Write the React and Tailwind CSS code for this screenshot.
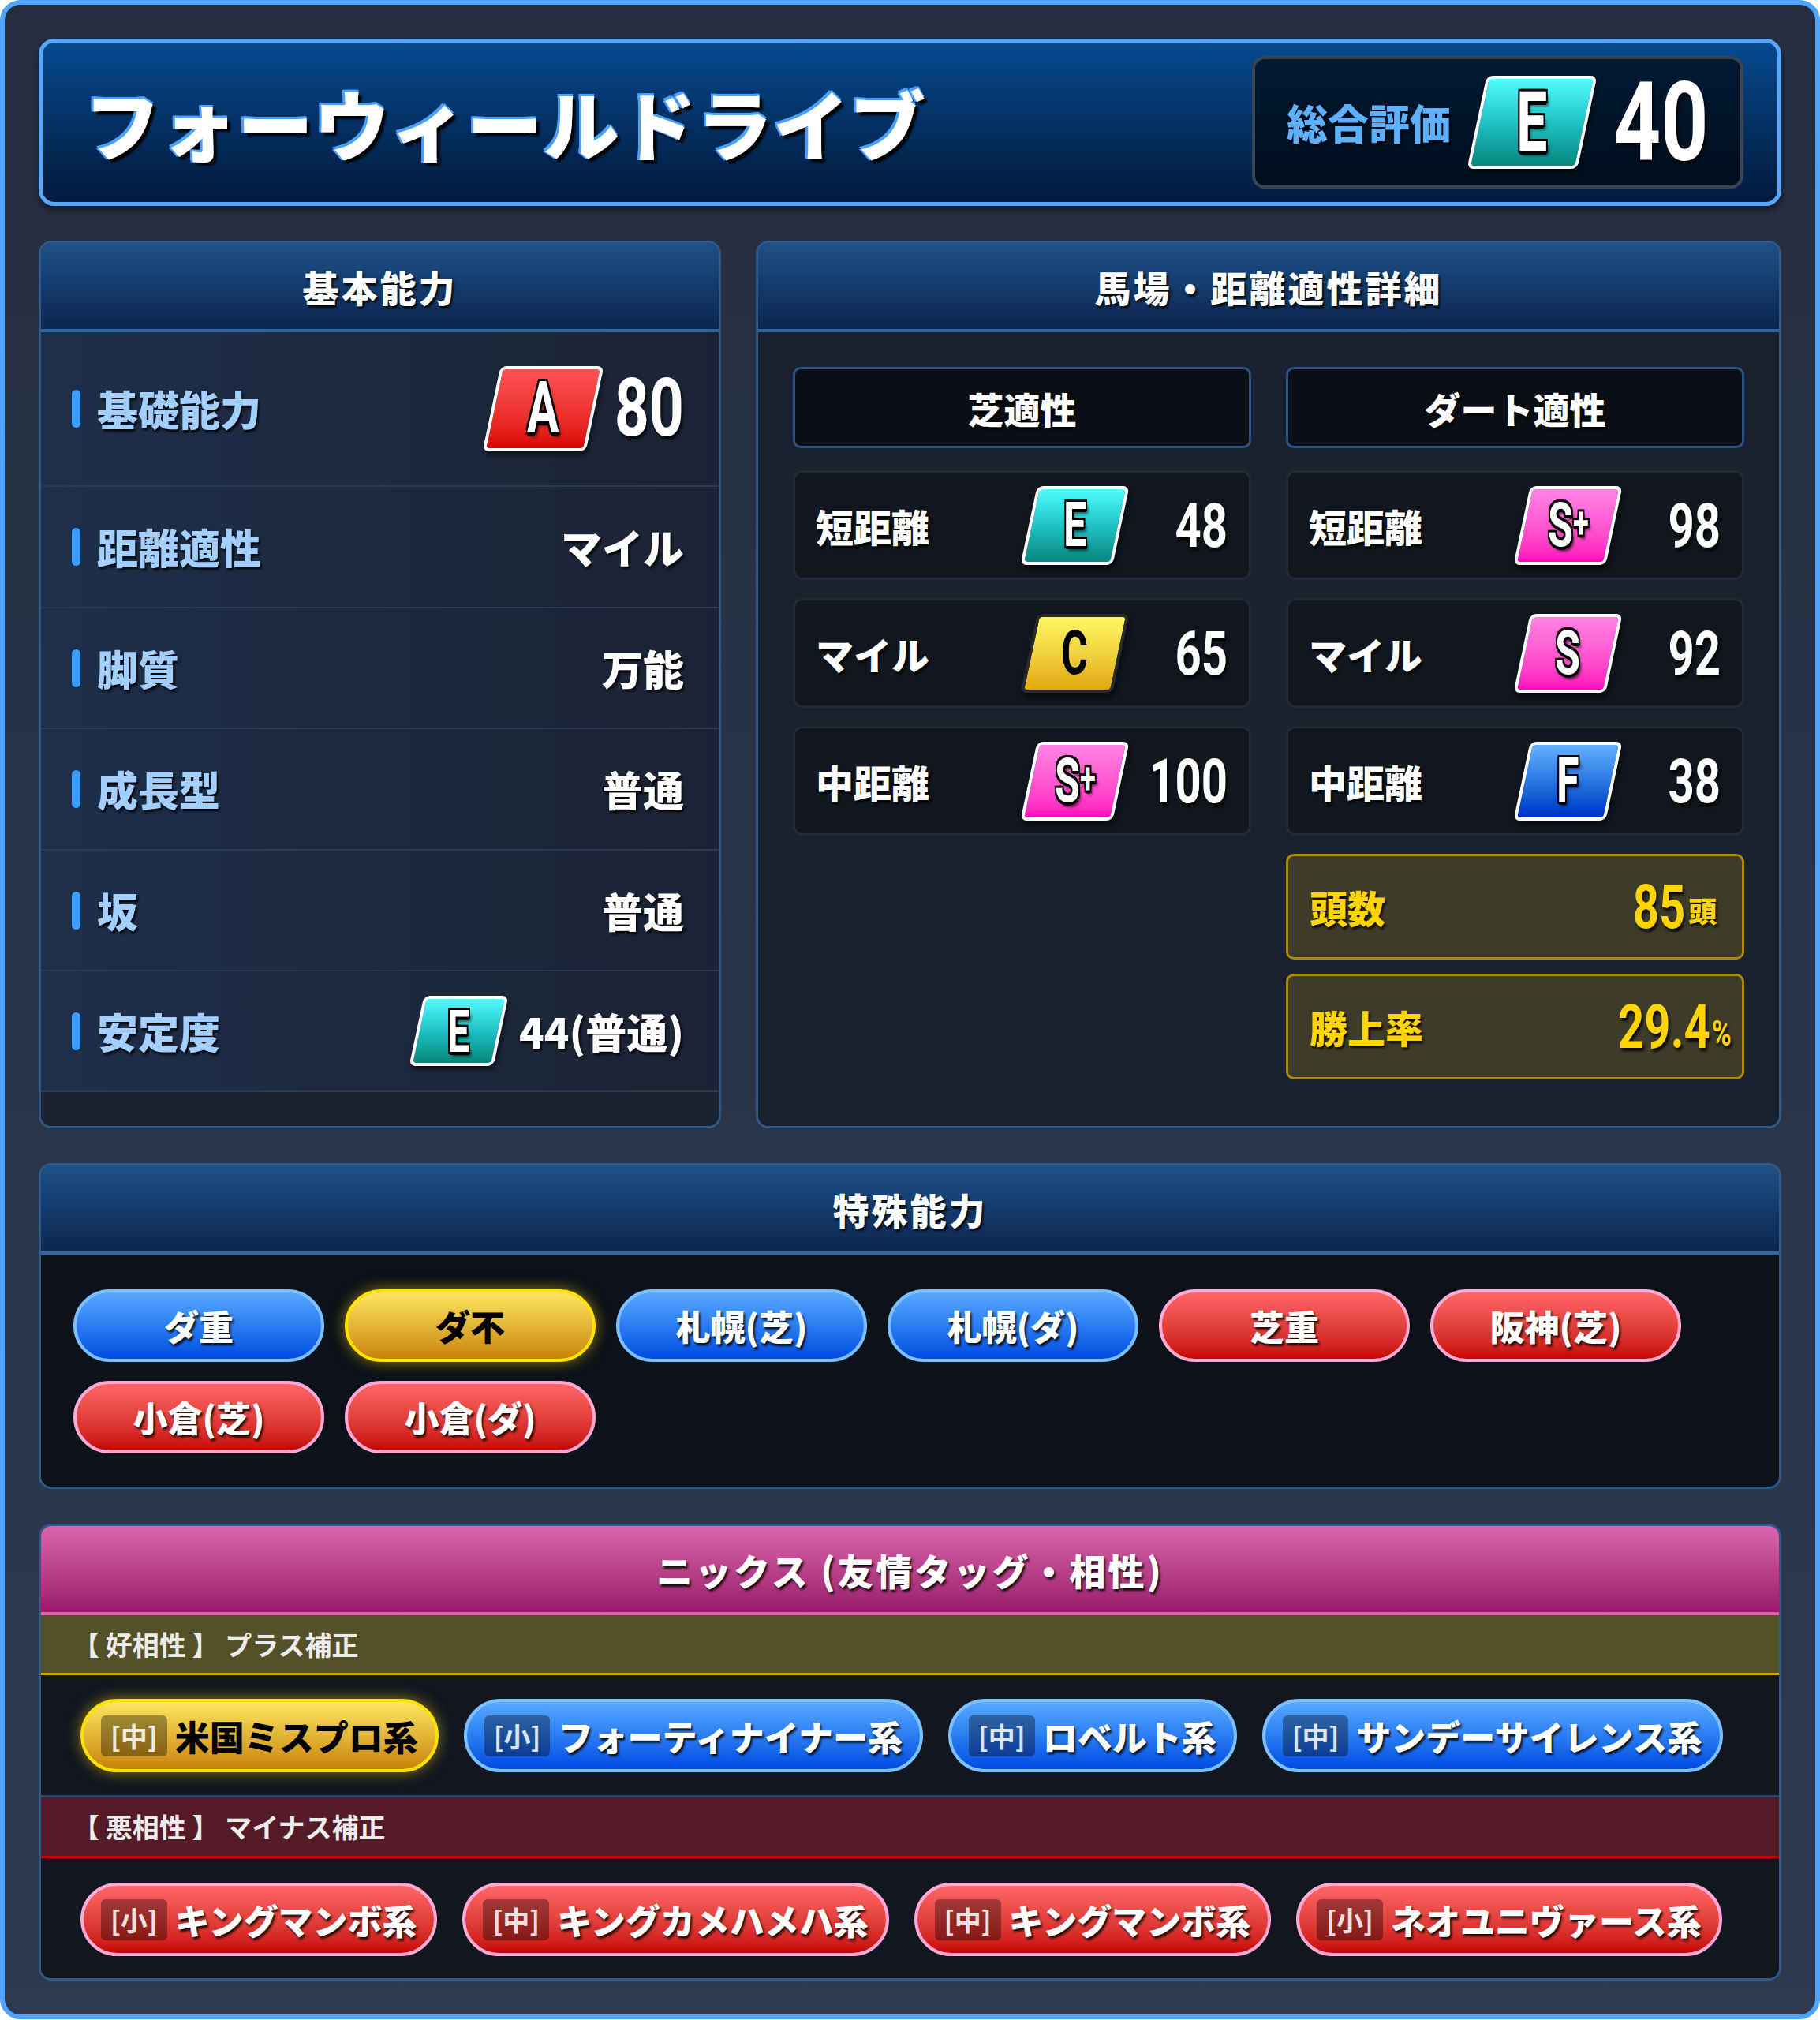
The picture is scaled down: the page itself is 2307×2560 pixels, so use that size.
import React from 'react';

// shared text styles
const jp = "[font-family:'Noto_Sans_CJK_JP','Noto_Sans',sans-serif]";
const numFont = "[font-family:Roboto,'Liberation_Sans',sans-serif]";
const dropShadow = '[text-shadow:2px_3px_3px_rgba(0,0,0,0.85)]';
const outline =
  '[text-shadow:-2px_-2px_0_#000,2px_-2px_0_#000,-2px_2px_0_#000,2px_2px_0_#000,0_3px_0_#000,3px_4px_3px_rgba(0,0,0,0.6)]';

const badgeTones = {
  cyan: 'from-[#4ffcff] via-[#1ec3c4] to-[#07867f] border-white',
  red: 'from-[#ff5252] to-[#dc0000] border-white',
  yellow: 'from-[#fff862] to-[#e0ab00] border-[#2a2a2a]',
  pink: 'from-[#ff82e3] to-[#ff00be] border-white',
  blue: 'from-[#64b2ff] to-[#002fc4] border-white',
};

const Num = ({ children, className = '' }) => (
  <span className={`inline-block scale-y-[1.33] font-bold leading-none ${numFont} ${className}`}>{children}</span>
);

const Badge = ({ grade, tone, box, text }) => {
  const dark = tone === 'yellow';
  return (
    <div
      className={`flex items-center justify-center skew-x-[-12deg] rounded-[8px] border-[4px] bg-linear-to-b shadow-[3px_5px_6px_rgba(0,0,0,0.55)] ${badgeTones[tone]} ${box}`}
    >
      <span className="inline-block skew-x-[12deg]">
        <span
          className={`inline-block scale-y-[1.5] font-bold leading-none ${numFont} ${text} ${
            dark ? 'text-black' : `text-white ${outline}`
          }`}
        >
          {grade.replace('+', '')}
          {grade.includes('+') && <span className="text-[0.7em] align-[0.2em]">+</span>}
        </span>
      </span>
    </div>
  );
};

const Panel = ({ title, children, className = '', headClass = 'from-[#1e5188] to-[#0b2650] border-[#2f68a3]' }) => (
  <div className={`flex flex-col overflow-hidden rounded-[16px] border-[3px] border-[#2e5a8a] ${className}`}>
    <div
      className={`flex h-[113px] shrink-0 items-center justify-center border-b-[4px] bg-linear-to-b ${headClass}`}
    >
      <h2 className={`text-[46px] font-black leading-none tracking-[3px] text-white ${dropShadow}`}>{title}</h2>
    </div>
    {children}
  </div>
);

const basicRows = [
  { label: '基礎能力', h: 'h-[196px]', value: 'badgeA' },
  { label: '距離適性', h: 'h-[154px]', value: 'マイル' },
  { label: '脚質', h: 'h-[153px]', value: '万能' },
  { label: '成長型', h: 'h-[154px]', value: '普通' },
  { label: '坂', h: 'h-[153px]', value: '普通' },
  { label: '安定度', h: 'h-[153px]', value: 'badgeE' },
];

const turf = [
  ['短距離', 'E', 'cyan', '48'],
  ['マイル', 'C', 'yellow', '65'],
  ['中距離', 'S+', 'pink', '100'],
];
const dirt = [
  ['短距離', 'S+', 'pink', '98'],
  ['マイル', 'S', 'pink', '92'],
  ['中距離', 'F', 'blue', '38'],
];

const pillTones = {
  blue: 'border-[#7ac0ff] from-[#58a9ff] to-[#0349e2] text-white',
  yellow: 'border-[#ffe100] from-[#fbe75e] to-[#c98400] text-black shadow-[0_0_18px_rgba(255,215,0,0.55)]',
  red: 'border-[#ffa8d6] from-[#ff6666] to-[#c70000] text-white',
};

const specials = [
  ['ダ重', 'blue'],
  ['ダ不', 'yellow'],
  ['札幌(芝)', 'blue'],
  ['札幌(ダ)', 'blue'],
  ['芝重', 'red'],
  ['阪神(芝)', 'red'],
  ['小倉(芝)', 'red'],
  ['小倉(ダ)', 'red'],
];

const goodNicks = [
  ['中', '米国ミスプロ系', 'yellow'],
  ['小', 'フォーティナイナー系', 'blue'],
  ['中', 'ロベルト系', 'blue'],
  ['中', 'サンデーサイレンス系', 'blue'],
];
const badNicks = [
  ['小', 'キングマンボ系', 'red'],
  ['中', 'キングカメハメハ系', 'red'],
  ['中', 'キングマンボ系', 'red'],
  ['小', 'ネオユニヴァース系', 'red'],
];

const AptCard = ({ label, grade, tone, value }) => (
  <div className="flex h-[139px] items-center rounded-[12px] border-[3px] border-[#232a37] bg-[#11161f] pl-[26px] pr-[27px]">
    <span className={`flex-1 text-[48px] font-black leading-none text-white ${dropShadow}`}>{label}</span>
    <Badge grade={grade} tone={tone} box="w-[117px] h-[100px]" text="text-[52px]" />
    <div className="w-[135px] text-right">
      <Num className={`text-[58px] text-white ${dropShadow}`}>{value}</Num>
    </div>
  </div>
);

const NickPill = ({ size, name, tone }) => (
  <div
    className={`flex h-[93px] items-center gap-[10px] rounded-full border-[4px] bg-linear-to-b pl-[22px] pr-[22px] ${pillTones[tone]}`}
  >
    <span className="flex h-[52px] items-center rounded-[6px] bg-black/35 px-[12px] text-[34px] font-bold leading-none text-white/85">
      [{size}]
    </span>
    <span className={`text-[44px] font-black leading-none ${tone === 'yellow' ? '' : dropShadow}`}>{name}</span>
  </div>
);

export default function App() {
  return (
    <div className={`w-[2307px] bg-white ${jp}`}>
      <div className="flex flex-col gap-[44px] rounded-[26px] border-[6px] border-[#4da3ff] bg-linear-to-b from-[#252e40] to-[#2e3a52] p-[43px]">
        {/* title bar */}
        <div className="flex h-[212px] items-center justify-between rounded-[20px] border-[5px] border-[#55a7ff] bg-linear-to-b from-[#064a90] to-[#021a3c] pl-[53px] pr-[43px] shadow-[0_6px_10px_rgba(0,0,0,0.45)]">
          <h1 className="text-[96px] font-black leading-none tracking-[1px] text-white [text-shadow:-3px_-3px_0_#4aa0ff,-3px_0_0_#4aa0ff,0_-3px_0_#4aa0ff,4px_4px_3px_#000]">
            フォーウィールドライブ
          </h1>
          <div className="flex h-[168px] w-[623px] items-center gap-[33px] rounded-[16px] border-[4px] border-[#3b4453] bg-linear-to-b from-[#021a33] to-[#000e1e] pl-[40px]">
            <span className={`text-[52px] font-black leading-none text-[#5cb0ff] ${dropShadow}`}>総合評価</span>
            <Badge grade="E" tone="cyan" box="w-[140px] h-[118px]" text="text-[70px]" />
            <Num className={`text-[105px] text-white ${dropShadow}`}>40</Num>
          </div>
        </div>

        {/* basic + aptitude */}
        <div className="grid grid-cols-[865px_1fr] gap-[44px]">
          <Panel title="基本能力">
            <div className="bg-linear-to-r from-[#1d2f4a] to-[#1b2333]">
              {basicRows.map((r) => (
                <div
                  key={r.label}
                  className={`flex items-center justify-between border-b-2 border-[#2a3a52] pl-[39px] pr-[44px] ${r.h}`}
                >
                  <div className="flex items-center gap-[21px]">
                    <span className="h-[48px] w-[11px] rounded-full bg-[#3b9cff]" />
                    <span className={`text-[52px] font-black leading-none text-[#a3cfff] ${dropShadow}`}>{r.label}</span>
                  </div>
                  {r.value === 'badgeA' ? (
                    <div className="flex items-center gap-[25px]">
                      <Badge grade="A" tone="red" box="w-[131px] h-[108px]" text="text-[60px]" />
                      <Num className={`text-[77px] text-white ${dropShadow}`}>80</Num>
                    </div>
                  ) : r.value === 'badgeE' ? (
                    <div className="flex items-center gap-[23px]">
                      <Badge grade="E" tone="cyan" box="w-[107px] h-[89px]" text="text-[50px]" />
                      <span className={`text-[52px] font-black leading-none text-white ${dropShadow}`}>44(普通)</span>
                    </div>
                  ) : (
                    <span className={`text-[52px] font-black leading-none text-white ${dropShadow}`}>{r.value}</span>
                  )}
                </div>
              ))}
            </div>
            <div className="min-h-[43px] grow bg-[#1b2232]" />
          </Panel>

          <Panel title="馬場・距離適性詳細">
            <div className="grid grow grid-cols-2 items-start gap-x-[44px] bg-[#1b2131] p-[44px]">
              {[
                ['芝適性', turf],
                ['ダート適性', dirt],
              ].map(([head, rows], ci) => (
                <div key={head} className="flex flex-col gap-[23px]">
                  <div className="mb-[5px] flex h-[103px] items-center justify-center rounded-[10px] border-[3px] border-[#2b5486] bg-[#0b0e14]">
                    <span className={`text-[46px] font-black leading-none text-white ${dropShadow}`}>{head}</span>
                  </div>
                  {rows.map(([label, grade, tone, value]) => (
                    <AptCard key={label} label={label} grade={grade} tone={tone} value={value} />
                  ))}
                  {ci === 1 && (
                    <div className="flex flex-col gap-[18px]">
                      <div className="flex h-[134px] items-center rounded-[10px] border-[3px] border-[#ad8a00] bg-[#3d3c28] pl-[27px]">
                        <span className={`flex-1 text-[48px] font-black leading-none text-[#ffd400] ${dropShadow}`}>頭数</span>
                        <div className="w-[170px] text-center">
                          <Num className={`text-[58px] text-[#ffd400] ${dropShadow}`}>85</Num>
                          <span className={`ml-[4px] text-[36px] font-black leading-none text-[#ffd400] ${dropShadow}`}>頭</span>
                        </div>
                      </div>
                      <div className="flex h-[134px] items-center rounded-[10px] border-[3px] border-[#ad8a00] bg-[#3d3c28] pl-[27px]">
                        <span className={`flex-1 text-[48px] font-black leading-none text-[#ffd400] ${dropShadow}`}>勝上率</span>
                        <div className="w-[170px] text-center">
                          <Num className={`text-[58px] text-[#ffd400] ${dropShadow}`}>29.4</Num>
                          <span className={`ml-[2px] inline-block scale-y-[1.3] text-[34px] font-bold leading-none text-[#ffd400] ${numFont} ${dropShadow}`}>%</span>
                        </div>
                      </div>
                    </div>
                  )}
                </div>
              ))}
            </div>
          </Panel>
        </div>

        {/* special abilities */}
        <Panel title="特殊能力">
          <div className="flex flex-wrap gap-x-[26px] gap-y-[24px] bg-[#0d1119] pb-[42px] pl-[41px] pr-[41px] pt-[44px]">
            {specials.map(([name, tone]) => (
              <div
                key={name}
                className={`flex h-[92px] w-[318px] items-center justify-center rounded-full border-[4px] bg-linear-to-b ${pillTones[tone]}`}
              >
                <span className={`text-[44px] font-black leading-none ${tone === 'yellow' ? '' : dropShadow}`}>{name}</span>
              </div>
            ))}
          </div>
        </Panel>

        {/* nicks */}
        <Panel title="ニックス (友情タッグ・相性)" headClass="from-[#d866a9] to-[#9a196c] border-[#e060b0]">
          <div className="flex h-[76px] items-center border-b-[3px] border-[#c9a400] bg-[#545027] pl-[40px]">
            <span className="text-[34px] font-bold leading-none text-[#ececec]">【 好相性 】 プラス補正</span>
          </div>
          <div className="flex flex-wrap gap-[32px] bg-[#121620] pb-[29px] pl-[50px] pt-[30px]">
            {goodNicks.map(([s, n, t], i) => (
              <NickPill key={i} size={s} name={n} tone={t} />
            ))}
          </div>
          <div className="flex h-[80px] items-center border-b-[3px] border-t-[3px] border-[#2a4769] border-b-[#cc0000] bg-[#541a27] pl-[40px]">
            <span className="text-[34px] font-bold leading-none text-[#ececec]">【 悪相性 】 マイナス補正</span>
          </div>
          <div className="flex flex-wrap gap-[32px] bg-[#121620] pb-[28px] pl-[50px] pt-[31px]">
            {badNicks.map(([s, n, t], i) => (
              <NickPill key={i} size={s} name={n} tone={t} />
            ))}
          </div>
        </Panel>
      </div>
    </div>
  );
}
